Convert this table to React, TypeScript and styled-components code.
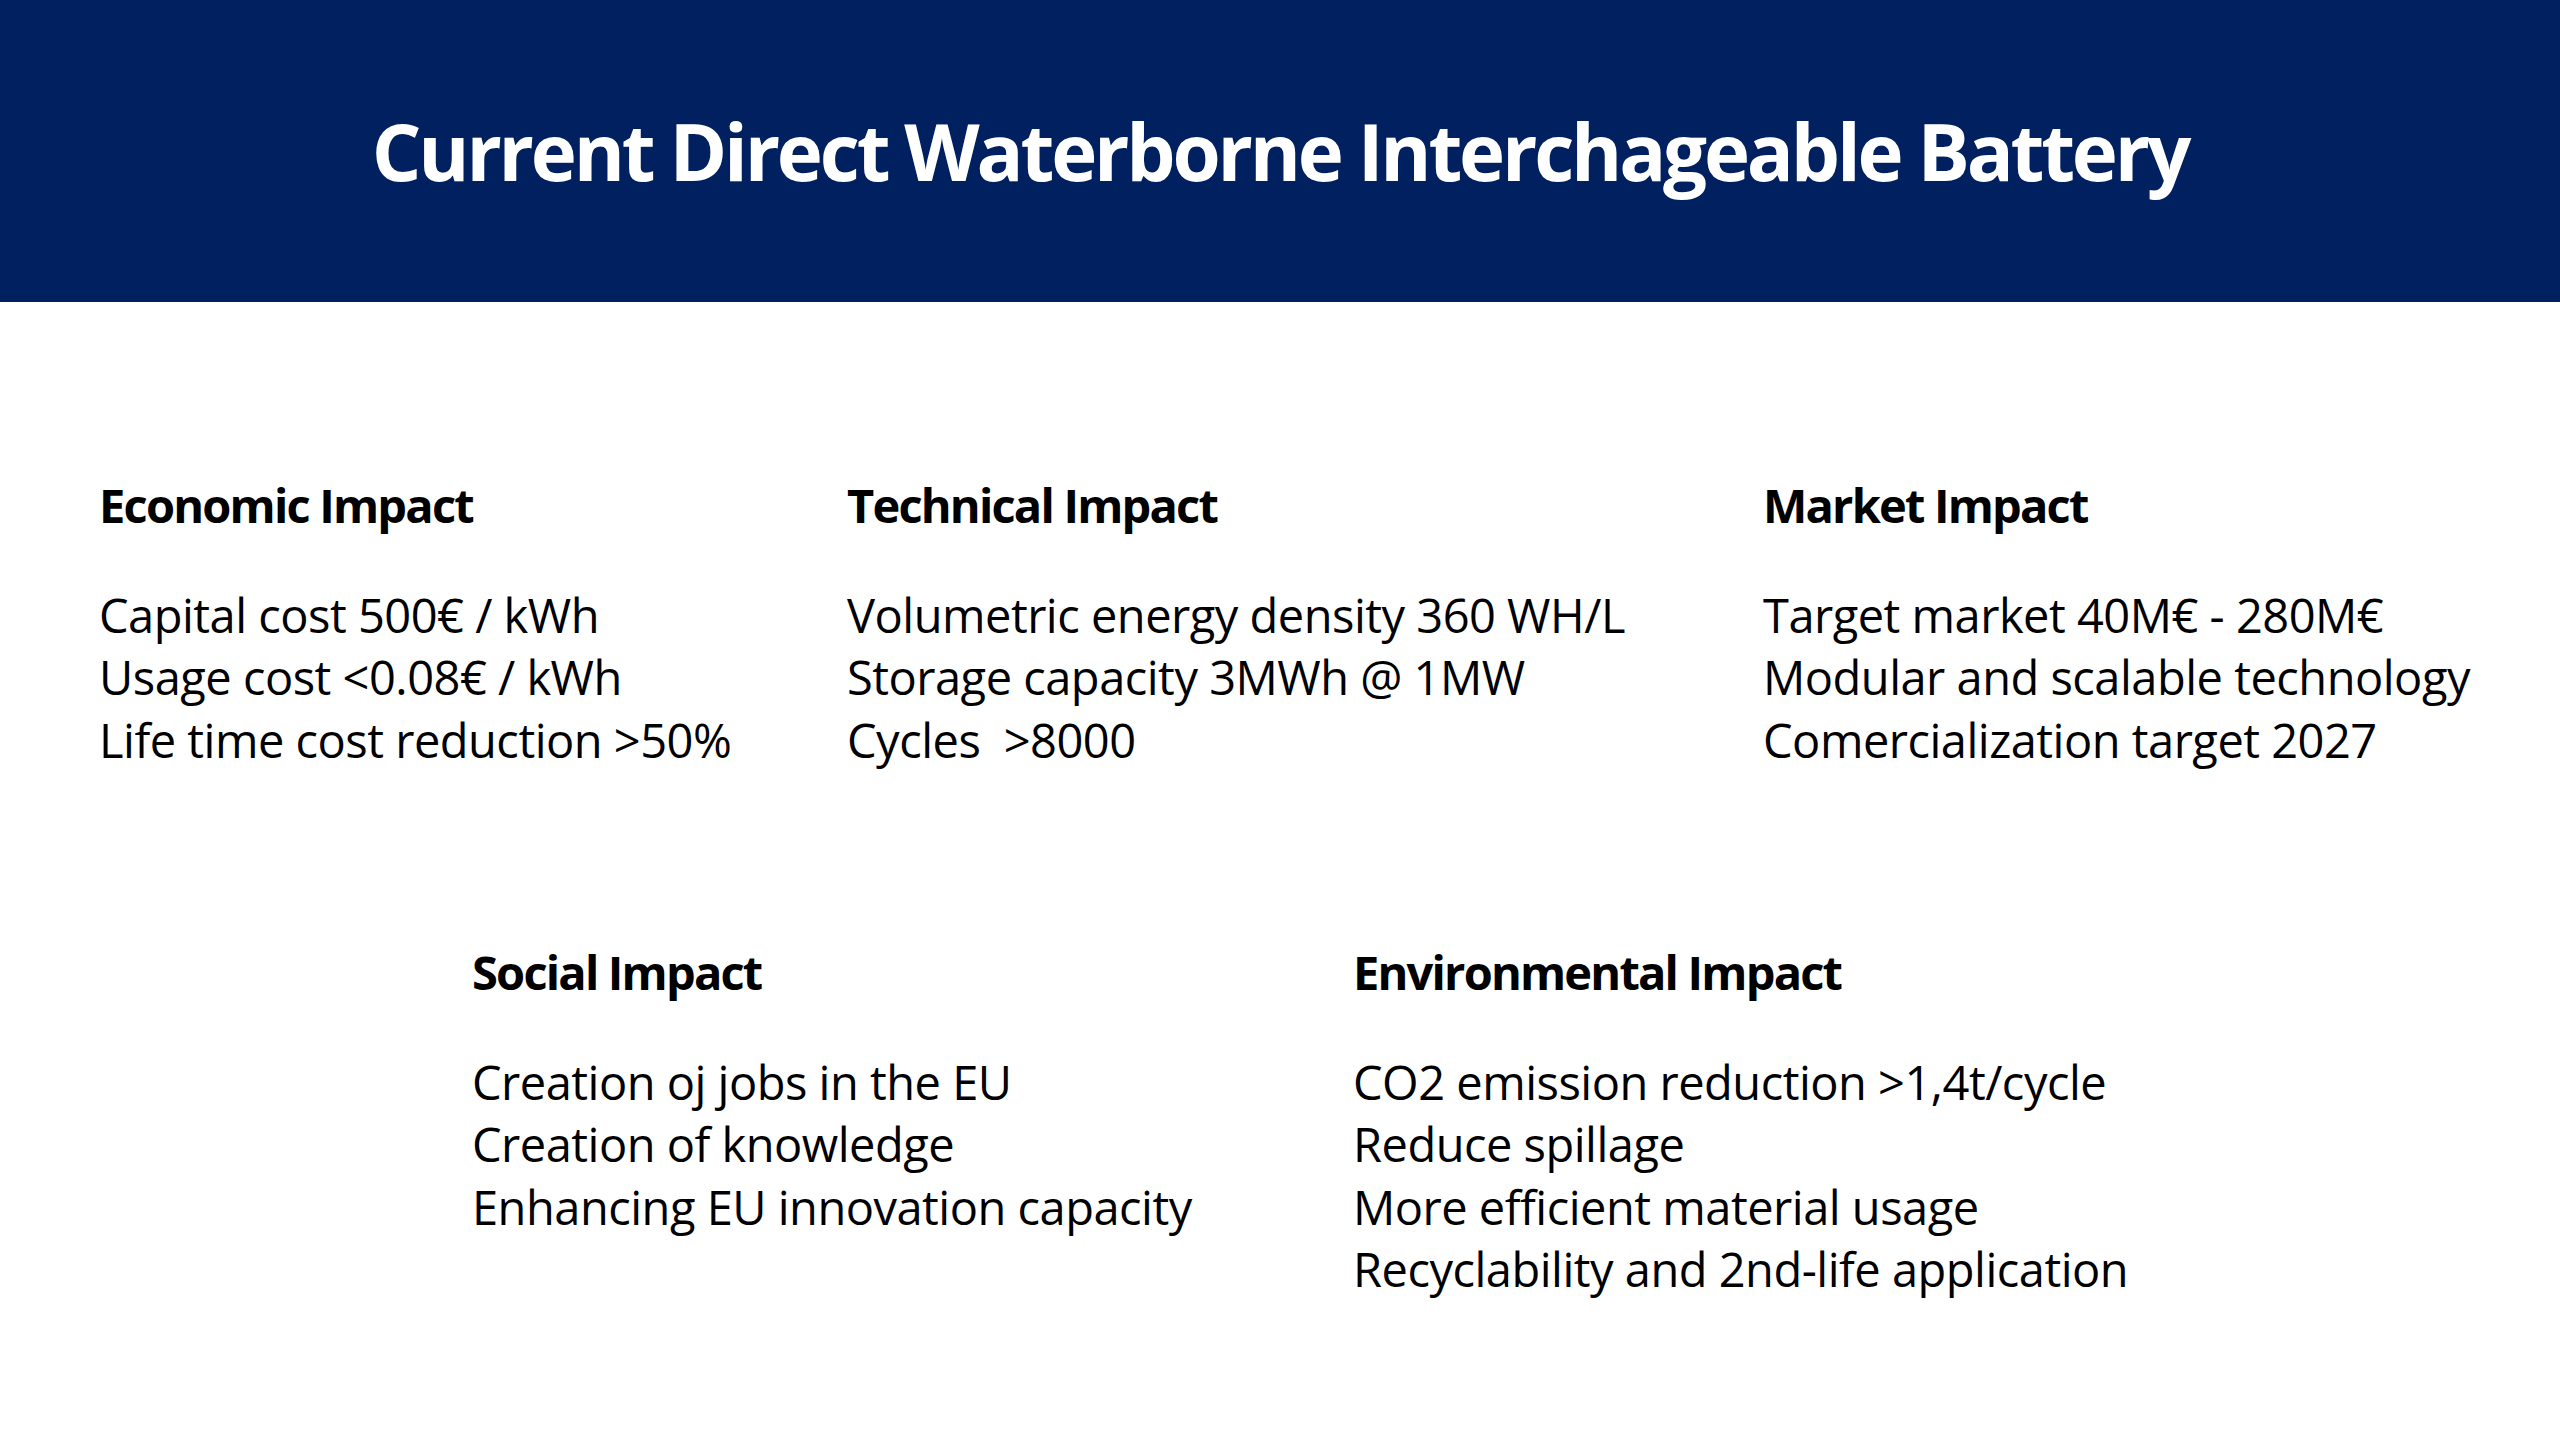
import React from "react";
import styled, { createGlobalStyle } from "styled-components";

const Global = createGlobalStyle`
  html, body { margin: 0; padding: 0; background: #ffffff; }
  body { font-family: "Open Sans", "Liberation Sans", sans-serif; color: #000; }
`;

const Slide = styled.div`
  width: 2560px;
  height: 1440px;
  background: #ffffff;
  display: flex;
  flex-direction: column;
  overflow: hidden;
`;

const Header = styled.header`
  height: 302px;
  background: #002060;
  display: flex;
  align-items: center;
  justify-content: center;
`;

const Title = styled.h1`
  margin: 0;
  font-family: "Open Sans", sans-serif;
  font-weight: 700;
  font-size: 78px;
  color: #ffffff;
  letter-spacing: -3.2px;
`;

const Row = styled.section<{ $pad: number; $cols: string; $top: number }>`
  display: grid;
  grid-template-columns: ${(p) => p.$cols};
  padding-left: ${(p) => p.$pad}px;
  margin-top: ${(p) => p.$top}px;
`;

const Block = styled.div`
  display: flex;
  flex-direction: column;
  gap: 47px;
`;

const Heading = styled.h2`
  margin: 0;
  font-size: 47px;
  line-height: 62.5px;
  font-weight: 700;
  letter-spacing: -1.8px;
  white-space: nowrap;
`;

const Lines = styled.ul`
  margin: 0;
  padding: 0;
  list-style: none;
`;

const Line = styled.li`
  font-size: 47px;
  line-height: 62.5px;
  font-weight: 400;
  letter-spacing: -0.5px;
  white-space: pre;
`;

type Item = { title: string; lines: string[] };

const row1: Item[] = [
  {
    title: "Economic Impact",
    lines: ["Capital cost 500€ / kWh", "Usage cost <0.08€ / kWh", "Life time cost reduction >50%"],
  },
  {
    title: "Technical Impact",
    lines: ["Volumetric energy density 360 WH/L", "Storage capacity 3MWh @ 1MW", "Cycles  >8000"],
  },
  {
    title: "Market Impact",
    lines: ["Target market 40M€ - 280M€", "Modular and scalable technology", "Comercialization target 2027"],
  },
];

const row2: Item[] = [
  {
    title: "Social Impact",
    lines: ["Creation oj jobs in the EU", "Creation of knowledge", "Enhancing EU innovation capacity"],
  },
  {
    title: "Environmental Impact",
    lines: [
      "CO2 emission reduction >1,4t/cycle",
      "Reduce spillage",
      "More efficient material usage",
      "Recyclability and 2nd-life application",
    ],
  },
];

const ImpactBlock = ({ item }: { item: Item }) => (
  <Block>
    <Heading>{item.title}</Heading>
    <Lines>
      {item.lines.map((l) => (
        <Line key={l}>{l}</Line>
      ))}
    </Lines>
  </Block>
);

export default function App() {
  return (
    <>
      <Global />
      <Slide>
        <Header>
          <Title>Current Direct Waterborne Interchageable Battery</Title>
        </Header>
        <Row $pad={99} $cols="748px 916px auto" $top={172}>
          {row1.map((it) => (
            <ImpactBlock key={it.title} item={it} />
          ))}
        </Row>
        <Row $pad={472} $cols="881px auto" $top={170}>
          {row2.map((it) => (
            <ImpactBlock key={it.title} item={it} />
          ))}
        </Row>
      </Slide>
    </>
  );
}
